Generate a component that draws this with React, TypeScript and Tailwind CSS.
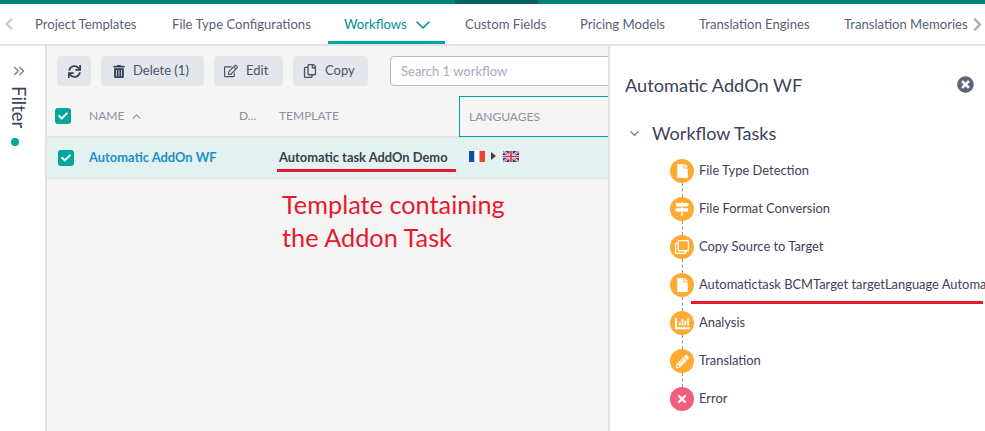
import React from "react";
import { FaSync, FaTrashAlt, FaRegEdit, FaRegCopy, FaCheck, FaFile, FaMapSigns, FaRegClone, FaChartBar, FaPencilAlt, FaTimes, FaTimesCircle, FaChevronLeft, FaChevronRight } from "react-icons/fa";
import { LuChevronDown, LuChevronUp, LuChevronsRight } from "react-icons/lu";

const tabs: [string, string][] = [
  ["Project Templates", "w-[137px]"],
  ["File Type Configurations", "w-[156px]"],
];
const rest: [string, string][] = [
  ["Custom Fields", "w-[115px]"],
  ["Pricing Models", "w-[119px]"],
  ["Translation Engines", "w-[145px]"],
];

function Check() {
  return (
    <span className="flex h-[16px] w-[16px] items-center justify-center rounded-[3px] bg-[#00a79a] text-white">
      <FaCheck className="h-[10px] w-[10px]" />
    </span>
  );
}

function Task({ icon, label, error, last }: { icon: React.ReactNode; label: string; error?: boolean; last?: boolean }) {
  return (
    <div className="relative flex h-[38px] items-center">
      <span className={`z-10 flex h-[24px] w-[24px] shrink-0 items-center justify-center rounded-full text-white ${error ? "bg-[#f25e7c]" : "bg-[#ffaa33]"}`}>
        {icon}
      </span>
      {!last && <span className="absolute left-[12px] top-[31px] h-[14px] border-l border-dashed border-[#8d96a8]" />}
      <span className="ml-[5px] whitespace-nowrap text-[12.9px] text-[#3b4258]">{label}</span>
    </div>
  );
}

export default function App() {
  return (
    <div className="relative h-[431px] w-[985px] overflow-hidden bg-white font-['Lato','Liberation_Sans',sans-serif] text-[#3b4258]">
      <div className="flex h-[4px] bg-[#00827c]">
        <div className="w-[455px]" />
        <div className="w-[83px] bg-[#04625f]" />
      </div>

      <div className="flex h-[42px] items-stretch border-b-2 border-[#e1e3e9] text-[13.1px] text-[#5a6274]">
        <div className="flex w-[35px] shrink-0 items-center pl-[4px] text-[#c8cacf]">
          <FaChevronLeft className="h-[14px] w-[10px]" />
        </div>
        {tabs.map(([t, w]) => (
          <div key={t} className={`flex shrink-0 items-center pt-[2px] ${w}`}>{t}</div>
        ))}
        <div className="flex w-[117px] shrink-0 items-center gap-[4px] border-b-[3px] border-[#00a79a] pl-[16px] pt-[5px] text-[#00918a]">
          Workflows <LuChevronDown className="h-[24px] w-[24px]" strokeWidth={1.5} />
        </div>
        <div className="w-[20px] shrink-0" />
        {rest.map(([t, w]) => (
          <div key={t} className={`flex shrink-0 items-center pt-[2px] ${w}`}>{t}</div>
        ))}
        <div className="flex w-[124px] shrink-0 items-center overflow-hidden whitespace-nowrap pt-[2px]">Translation Memories</div>
        <div className="flex flex-1 items-center pl-[4px] text-[#a9adb5]">
          <FaChevronRight className="h-[15px] w-[11px]" />
        </div>
      </div>

      <div className="flex h-[385px]">
        <aside className="flex w-[47px] shrink-0 flex-col items-center border-r-2 border-[#e1e3e9] pt-[16px]">
          <LuChevronsRight className="mr-[7px] h-[18px] w-[18px] text-[#6b7285]" strokeWidth={1.5} />
          <span className="mr-[7px] mt-[6px] text-[18.5px] leading-[18px] text-[#3b4258] [writing-mode:vertical-rl]">Filter</span>
          <span className="mr-[15px] mt-[10px] h-[8px] w-[8px] rounded-full bg-[#00a79a]" />
        </aside>

        <main className="flex w-[561px] shrink-0 flex-col overflow-hidden bg-[#f5f5f5]">
          <div className="flex h-[50px] shrink-0 items-start gap-[10px] pl-[10px] pt-[10px] text-[13px] text-[#4d5468]">
            <button className="flex h-[30px] w-[34px] shrink-0 items-center justify-center rounded-[4px] bg-[#e3e6ea] text-[#3b4258]">
              <FaSync className="h-[13px] w-[13px]" />
            </button>
            <button className="flex h-[30px] w-[103px] shrink-0 items-center gap-[8px] rounded-[4px] bg-[#e3e6ea] pl-[12px]">
              <FaTrashAlt className="h-[13px] w-[12px] text-[#3b4258]" /> Delete (1)
            </button>
            <button className="flex h-[30px] w-[69px] shrink-0 items-center gap-[8px] rounded-[4px] bg-[#e3e6ea] pl-[10px]">
              <FaRegEdit className="h-[14px] w-[14px]" /> Edit
            </button>
            <button className="flex h-[30px] w-[75px] shrink-0 items-center gap-[8px] rounded-[4px] bg-[#e3e6ea] pl-[10px]">
              <FaRegCopy className="h-[14px] w-[14px]" /> Copy
            </button>
            <div className="ml-[12px] flex h-[30px] w-[260px] shrink-0 items-center rounded-[4px] border border-[#b8bdc8] bg-white pl-[10px] pt-[1px] text-[#a5abb8]">
              Search 1 workflow
            </div>
          </div>

          <div className="flex h-[42px] shrink-0 items-stretch border-b-2 border-[#e1e6e8] text-[12px] text-[#8b92a1]">
            <div className="flex w-[42px] shrink-0 items-center pl-[8px]"><Check /></div>
            <div className="flex w-[150px] shrink-0 items-center gap-[6px]">NAME <LuChevronUp className="h-[13px] w-[13px]" /></div>
            <div className="flex w-[40px] shrink-0 items-center">D...</div>
            <div className="flex w-[180px] shrink-0 items-center">TEMPLATE</div>
            <div className="mb-[-1px] flex flex-1 items-center border border-r-0 border-[#00a79a] pl-[9px]">LANGUAGES</div>
          </div>

          <div className="flex h-[41px] shrink-0 items-center border-b border-[#d9e6e5] bg-[#e3f1f0] text-[12.9px] font-bold">
            <div className="flex w-[42px] shrink-0 pl-[11px]"><Check /></div>
            <div className="w-[190px] shrink-0 text-[#1b8fcb]">Automatic AddOn WF</div>
            <div className="w-[190px] shrink-0 whitespace-nowrap text-[#3a3f4c]">Automatic task AddOn Demo</div>
            <svg width="16" height="11" viewBox="0 0 16 11" className="mb-[4px] shrink-0">
              <rect width="5.5" height="11" fill="#0d4ea6" />
              <rect x="5.5" width="5" height="11" fill="#fff" />
              <rect x="10.5" width="5.5" height="11" fill="#ef4135" />
            </svg>
            <span className="mb-[4px] ml-[6px] h-0 w-0 shrink-0 border-y-[4px] border-l-[5px] border-y-transparent border-l-[#3a3f4c]" />
            <svg width="16" height="11" viewBox="0 0 16 11" className="mb-[4px] ml-[7px] shrink-0">
              <rect width="16" height="11" fill="#2b3f8f" />
              <path d="M0 0L16 11M16 0L0 11" stroke="#fff" strokeWidth="2" />
              <path d="M0 0L16 11M16 0L0 11" stroke="#d6243a" strokeWidth="0.8" />
              <path d="M8 0V11M0 5.5H16" stroke="#fff" strokeWidth="3" />
              <path d="M8 0V11M0 5.5H16" stroke="#d6243a" strokeWidth="1.6" />
            </svg>
          </div>
        </main>

        <section className="relative flex-1 overflow-hidden border-l-2 border-[#e1e3e9] pl-[15px] pt-[27px]">
          <h1 className="text-[18.2px] leading-[24px] text-[#3b4258]">Automatic AddOn WF</h1>
          <FaTimesCircle className="absolute right-[11px] top-[30px] h-[17px] w-[17px] text-[#5f6579]" />
          <div className="mt-[24px] flex h-[24px] items-center gap-[10px] text-[18px]">
            <LuChevronDown className="ml-[2px] h-[15px] w-[15px] text-[#6b7285]" />
            <span>Workflow Tasks</span>
          </div>
          <div className="ml-[45px] mt-[7px]">
            <Task icon={<FaFile className="h-[14px] w-[11px]" />} label="File Type Detection" />
            <Task icon={<FaMapSigns className="h-[14px] w-[14px]" />} label="File Format Conversion" />
            <Task icon={<FaRegClone className="h-[14px] w-[14px]" />} label="Copy Source to Target" />
            <Task icon={<FaFile className="h-[14px] w-[11px]" />} label="Automatictask BCMTarget targetLanguage Automatic task AddOn" />
            <Task icon={<FaChartBar className="h-[15px] w-[15px]" />} label="Analysis" />
            <Task icon={<FaPencilAlt className="h-[13px] w-[13px]" />} label="Translation" />
            <Task error icon={<FaTimes className="h-[12px] w-[12px]" />} label="Error" last />
          </div>
        </section>
      </div>

      <span className="absolute left-[277px] top-[169px] h-[3px] w-[179px] bg-[#e8192c]" />
      <span className="absolute left-[691px] top-[301px] h-[3px] w-[292px] bg-[#e8192c]" />
      <div className="absolute left-[282px] top-[188px] text-[25.3px] leading-[33px] text-[#e8192c]">
        Template containing
        <br />
        the Addon Task
      </div>
    </div>
  );
}
